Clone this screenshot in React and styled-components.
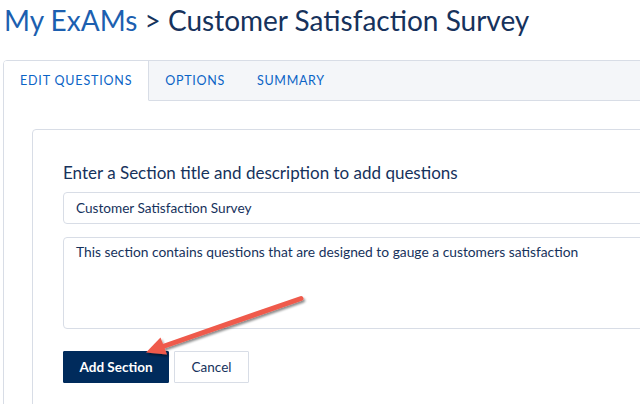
import React from "react";
import styled, { createGlobalStyle } from "styled-components";

const Global = createGlobalStyle`
  html, body { margin: 0; padding: 0; background: #fff; overflow: hidden; }
  body { font-family: Lato, "Open Sans", "Liberation Sans", sans-serif; color: #16325c; }
  * { box-sizing: border-box; }
`;

const Page = styled.div`
  position: relative;
  width: 640px;
  height: 404px;
  overflow: hidden;
`;

const Title = styled.h1`
  margin: 0;
  padding: 3px 0 0 4px;
  height: 60px;
  font-size: 28px;
  font-weight: 400;
  line-height: 34px;
  color: #16325c;
  white-space: nowrap;
`;

const Crumb = styled.span`
  color: #1c5fb0;
`;

const Tabset = styled.div`
  margin-left: 3px;
  width: 700px;
  height: 400px;
  border: 1px solid #d8dde6;
  border-radius: 4px;
  overflow: hidden;
`;

const TabList = styled.div`
  display: flex;
  height: 40px;
  background: #f4f6f9;
`;

const Tab = styled.div`
  display: flex;
  align-items: center;
  padding: 0 16px;
  background: ${(p) => (p.$active ? "#fff" : "transparent")};
  border-right: ${(p) => (p.$active ? "1px solid #d8dde6" : "none")};
  border-bottom: ${(p) => (p.$active ? "1px solid transparent" : "1px solid #d8dde6")};
  font-size: 12.5px;
  letter-spacing: ${(p) => (p.$active ? "0.82px" : "0.7px")};
  text-transform: uppercase;
  color: #0b64c6;
  white-space: nowrap;
`;

const TabFill = styled.div`
  flex: 1;
  border-bottom: 1px solid #d8dde6;
`;

const Panel = styled.div`
  padding: 28px 0 0 28px;
  background: #fff;
`;

const Card = styled.div`
  width: 680px;
  height: 320px;
  border: 1px solid #d8dde6;
  border-radius: 4px;
  padding: 33px 30px 0 30px;
  display: flex;
  flex-direction: column;
`;

const Label = styled.div`
  font-size: 17px;
  line-height: 20px;
  color: #16325c;
  margin-bottom: 9px;
`;

const Input = styled.div`
  height: 32px;
  border: 1px solid #d8dde6;
  border-radius: 4px;
  padding: 0 12px;
  display: flex;
  align-items: center;
  font-size: 13.6px;
  color: #16325c;
  white-space: nowrap;
`;

const TextArea = styled.div`
  margin-top: 13px;
  height: 92px;
  border: 1px solid #d8dde6;
  border-radius: 4px;
  padding: 5px 12px;
  font-size: 13.8px;
  line-height: 18px;
  color: #16325c;
  white-space: nowrap;
`;

const Buttons = styled.div`
  display: flex;
  gap: 5px;
  margin-top: 22px;
`;

const Button = styled.div`
  height: 32px;
  display: flex;
  align-items: center;
  justify-content: center;
  width: ${(p) => (p.$primary ? "106px" : "75px")};
  border: 1px solid ${(p) => (p.$primary ? "#002b5c" : "#d8dde6")};
  background: ${(p) => (p.$primary ? "#002b5c" : "#fff")};
  color: ${(p) => (p.$primary ? "#fff" : "#16325c")};
  font-size: 13.5px;
  font-weight: ${(p) => (p.$primary ? 700 : 400)};
  border-radius: 1px;
  white-space: nowrap;
`;

const ArrowLayer = styled.svg`
  position: absolute;
  left: 0;
  top: 0;
  pointer-events: none;
`;

export default function App() {
  return (
    <Page>
      <Global />
      <Title>
        <Crumb>My ExAMs</Crumb> &gt; Customer Satisfaction Survey
      </Title>
      <Tabset>
        <TabList>
          <Tab $active>Edit Questions</Tab>
          <Tab>Options</Tab>
          <Tab>Summary</Tab>
          <TabFill />
        </TabList>
        <Panel>
          <Card>
            <Label>Enter a Section title and description to add questions</Label>
            <Input>Customer Satisfaction Survey</Input>
            <TextArea>
              This section contains questions that are designed to gauge a customers satisfaction
            </TextArea>
            <Buttons>
              <Button $primary>Add Section</Button>
              <Button>Cancel</Button>
            </Buttons>
          </Card>
        </Panel>
      </Tabset>
      <ArrowLayer width="640" height="404" viewBox="0 0 640 404">
        <defs>
          <filter id="sh" x="-20%" y="-20%" width="140%" height="140%">
            <feDropShadow dx="1.5" dy="2" stdDeviation="1.2" floodColor="#000" floodOpacity="0.45" />
          </filter>
        </defs>
        <g filter="url(#sh)">
          <line x1="301" y1="298.5" x2="160" y2="347.5" stroke="#ef5a4c" strokeWidth="5" strokeLinecap="round" />
          <polygon points="146,352.5 160.5,337.5 167,354.5" fill="#ef5a4c" />
        </g>
      </ArrowLayer>
    </Page>
  );
}
